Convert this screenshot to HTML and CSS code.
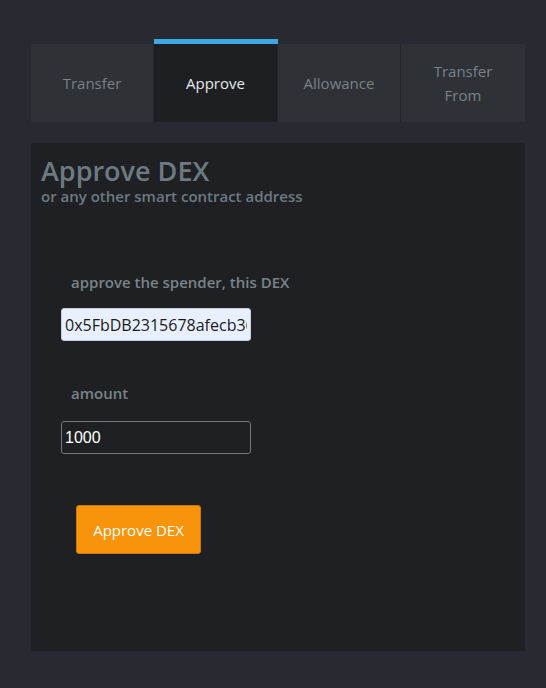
FILE: index.html
```html
<!DOCTYPE html>
<html>
<head>
<meta charset="utf-8">
<link rel="stylesheet" href="styles.css">
</head>
<body>
<div class="wrap">
  <nav class="tabs">
    <div class="tab">Transfer</div>
    <div class="tab active">Approve</div>
    <div class="tab">Allowance</div>
    <div class="tab">Transfer<br>From</div>
  </nav>
  <section class="panel">
    <h1 class="title">Approve DEX</h1>
    <p class="subtitle">or any other smart contract address</p>
    <form class="form">
      <label class="label">approve the spender, this DEX</label>
      <input class="input input-light" type="text" value="0x5FbDB2315678afecb367f032d93F642f64180aa3">
      <label class="label label-amount">amount</label>
      <input class="input input-dark" type="text" value="1000">
      <button type="button" class="btn">Approve DEX</button>
    </form>
  </section>
</div>
</body>
</html>
```
FILE: styles.css
```css
html, body {
  margin: 0;
  padding: 0;
  background: #272a30;
  font-family: "Open Sans", "Noto Sans", sans-serif;
}
.wrap {
  width: 494px;
  padding: 39px 0 0 31px;
}
.tabs {
  display: grid;
  grid-template-columns: 123px 124px 123px 124px;
  border-top: 5px solid transparent;
}
.tab {
  height: 78px;
  background: #2e3136;
  color: #7c8187;
  font-size: 15px;
  line-height: 24px;
  display: flex;
  align-items: center;
  justify-content: center;
  text-align: center;
  border-right: 1px solid #232529;
  box-sizing: border-box;
}
.tab:last-child { border-right: none; }
.tab.active {
  background: #1e1f22;
  color: #e6e8ea;
  position: relative;
}
.tab.active::before {
  content: "";
  position: absolute;
  left: 0;
  right: -1px;
  top: -5px;
  height: 5px;
  background: #3ea8e2;
}
.panel {
  margin-top: 21px;
  height: 508px;
  background: #1f2023;
  padding: 13px 10px 0;
  box-sizing: border-box;
}
.title {
  margin: 0;
  font-size: 27px;
  font-weight: 600;
  line-height: 30px;
  color: #6e7a82;
}
.subtitle {
  margin: 0;
  font-size: 15px;
  font-weight: 600;
  line-height: 20px;
  color: #6e7a82;
}
.form {
  display: flex;
  flex-direction: column;
  align-items: flex-start;
  padding-left: 20px;
  margin-top: 66px;
}
.label {
  padding-left: 10px;
  font-size: 15px;
  font-weight: 600;
  color: #7a8389;
  line-height: 20px;
}
.label-amount { margin-top: 42px; }
.input {
  margin-top: 16px;
  width: 190px;
  height: 33px;
  box-sizing: border-box;
  border-radius: 3px;
  font-size: 16px;
  padding: 0 3px;
  outline: none;
}
.input-light {
  background: #e9f0fd;
  border: 1px solid #c9ced6;
  color: #1a1a1a;
  font-family: "Open Sans", "Noto Sans", sans-serif;
}
.input-dark {
  margin-top: 18px;
  background: #1f2023;
  border: 1px solid #74777c;
  color: #ffffff;
  font-family: "Liberation Sans", Arial, sans-serif;
}
.btn {
  margin: 51px 0 0 15px;
  width: 125px;
  height: 49px;
  background: #f7940b;
  border: 1px solid #d27a00;
  border-radius: 3px;
  color: #ffffff;
  font-size: 15px;
  font-family: "Open Sans", "Noto Sans", sans-serif;
}
```
